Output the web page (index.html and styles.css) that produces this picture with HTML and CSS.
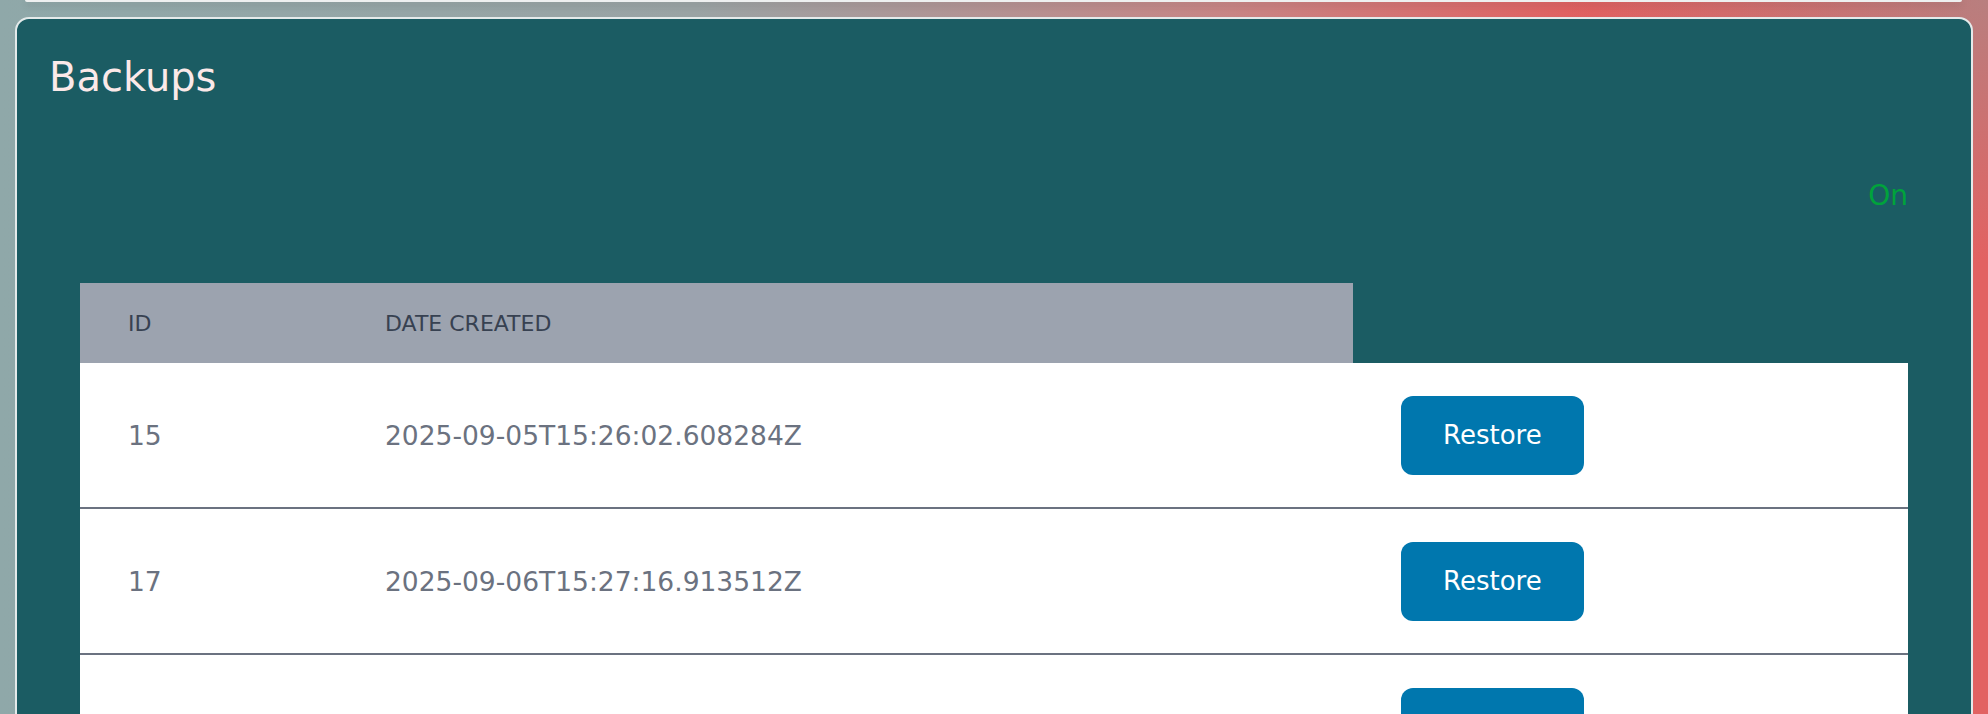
FILE: index.html
```html
<!DOCTYPE html>
<html lang="en">
<head>
  <meta charset="UTF-8">
  <title>Backups</title>
  <link rel="stylesheet" href="styles.css">
</head>
<body>

<div class="prev-card"></div>

<section class="card">
  <h1>Backups</h1>
  <div class="backups">
    <div class="status">On</div>
    <table class="backup-table">
      <thead>
        <tr>
          <th class="col-id">ID</th>
          <th class="col-date">Date Created</th>
          <th class="col-action"></th>
        </tr>
      </thead>
      <tbody>
        <tr>
          <td>15</td>
          <td>2025-09-05T15:26:02.608284Z</td>
          <td><button class="restore">Restore</button></td>
        </tr>
        <tr>
          <td>17</td>
          <td>2025-09-06T15:27:16.913512Z</td>
          <td><button class="restore">Restore</button></td>
        </tr>
        <tr>
          <td>18</td>
          <td>2025-09-07T15:28:05.114207Z</td>
          <td><button class="restore">Restore</button></td>
        </tr>
      </tbody>
    </table>
  </div>
</section>

</body>
</html>
```

FILE: styles.css
```css
html, body { height: 100%; }
body {
  margin: 0;
  padding: 0 15px;
  overflow: hidden;
  font-family: "DejaVu Sans", "Liberation Sans", sans-serif;
  background:
    radial-gradient(ellipse 420px 260px at 100% 0%, rgba(150,150,150,0.55), rgba(150,150,150,0) 100%),
    linear-gradient(90deg, #8fa8a9 0%, #9aa3a4 35%, #c88484 62%, #e15f5f 80%, #e26262 100%);
}

.prev-card {
  height: 0;
  margin: 0 11px 15px 10px;
  border-bottom: 2px solid #eef0f0;
  border-radius: 0 0 12px 12px;
  box-shadow: 0 3px 6px rgba(60,60,60,0.25);
}

.card {
  background: #1b5c63;
  border: 2px solid #e4eaea;
  border-radius: 14px;
  padding: 35px 32px 0;
  min-height: 800px;
}

.card h1 {
  margin: 0;
  font-size: 40px;
  font-weight: normal;
  line-height: 47px;
  color: #fbe9e9;
}

.backups { padding: 0 31px; }

.status {
  margin-top: 79px;
  text-align: right;
  font-size: 28px;
  line-height: 32px;
  color: #00a33b;
}

.backup-table {
  width: 100%;
  margin-top: 71px;
  border-collapse: collapse;
}

.backup-table th {
  height: 80px;
  padding: 0 48px;
  text-align: left;
  font-size: 22px;
  font-weight: normal;
  text-transform: uppercase;
  color: #374151;
  background: #9ca3af;
}
.backup-table th.col-action { background: transparent; }
.col-id { width: 161px; }
.col-date { width: 920px; }

.backup-table td {
  height: 144px;
  padding: 0 48px;
  background: #fff;
  border-bottom: 2px solid #6b7280;
  font-size: 26.5px;
  color: #6b7280;
}

.restore {
  height: 79px;
  padding: 0 42px;
  border: none;
  border-radius: 12px;
  background: #0077ae;
  color: #fff;
  font-family: "DejaVu Sans", sans-serif;
  font-size: 26px;
  cursor: pointer;
}
```
